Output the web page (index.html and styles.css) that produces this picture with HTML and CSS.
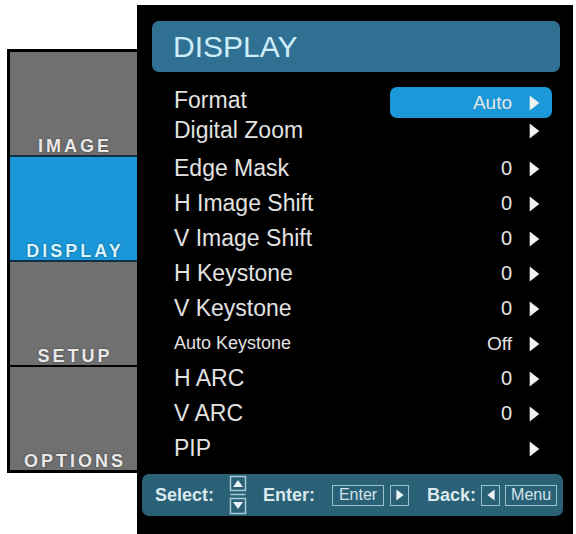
FILE: index.html
```html
<!DOCTYPE html>
<html lang="en">
<head>
  <meta charset="UTF-8" />
  <title>Projector OSD - Display</title>
  <link rel="stylesheet" href="styles.css">
</head>
<body>
  <svg class="defs" width="0" height="0">
    <symbol id="tri-right" viewBox="0 0 10 15"><path d="M0.5 0.5 L9.5 7.5 L0.5 14.5 Z" /></symbol>
    <symbol id="tri-left" viewBox="0 0 10 15"><path d="M9.5 0.5 L0.5 7.5 L9.5 14.5 Z" /></symbol>
  </svg>

  <div class="osd">
    <nav class="tabs">
      <div class="tab">IMAGE</div>
      <div class="tab active">DISPLAY</div>
      <div class="tab">SETUP</div>
      <div class="tab">OPTIONS</div>
    </nav>

    <section class="panel">
      <h1 class="panel-title">DISPLAY</h1>

      <ul class="items">
        <li class="item first">
          <span class="label">Format</span>
          <span class="val pill">Auto <svg class="arr"><use href="#tri-right"/></svg></span>
        </li>
        <li class="item second">
          <span class="label">Digital Zoom</span>
          <span class="val"><svg class="arr"><use href="#tri-right"/></svg></span>
        </li>
        <li class="item">
          <span class="label">Edge Mask</span>
          <span class="val">0 <svg class="arr"><use href="#tri-right"/></svg></span>
        </li>
        <li class="item">
          <span class="label">H Image Shift</span>
          <span class="val">0 <svg class="arr"><use href="#tri-right"/></svg></span>
        </li>
        <li class="item">
          <span class="label">V Image Shift</span>
          <span class="val">0 <svg class="arr"><use href="#tri-right"/></svg></span>
        </li>
        <li class="item">
          <span class="label">H Keystone</span>
          <span class="val">0 <svg class="arr"><use href="#tri-right"/></svg></span>
        </li>
        <li class="item">
          <span class="label">V Keystone</span>
          <span class="val">0 <svg class="arr"><use href="#tri-right"/></svg></span>
        </li>
        <li class="item small">
          <span class="label">Auto Keystone</span>
          <span class="val">Off <svg class="arr"><use href="#tri-right"/></svg></span>
        </li>
        <li class="item">
          <span class="label">H ARC</span>
          <span class="val">0 <svg class="arr"><use href="#tri-right"/></svg></span>
        </li>
        <li class="item">
          <span class="label">V ARC</span>
          <span class="val">0 <svg class="arr"><use href="#tri-right"/></svg></span>
        </li>
        <li class="item">
          <span class="label">PIP</span>
          <span class="val"><svg class="arr"><use href="#tri-right"/></svg></span>
        </li>
      </ul>

      <div class="hints">
        <span class="hint">Select:</span>
        <svg class="updown" width="18" height="40" viewBox="0 0 18 40">
          <rect x="1.5" y="1.5" width="15" height="14" />
          <path class="fill" d="M4 12 L9 5 L14 12 Z" />
          <line x1="1.5" y1="19.5" x2="16.5" y2="19.5" />
          <rect x="1.5" y="23.5" width="15" height="15" />
          <path class="fill" d="M4 27 L9 34 L14 27 Z" />
        </svg>
        <span class="hint enter">Enter:</span>
        <span class="key k-enter">Enter</span>
        <span class="key k-arrow"><svg class="karr"><use href="#tri-right"/></svg></span>
        <span class="hint back">Back:</span>
        <span class="key k-arrow k-left"><svg class="karr"><use href="#tri-left"/></svg></span>
        <span class="key k-menu">Menu</span>
      </div>
    </section>
  </div>
</body>
</html>
```

FILE: styles.css
```css
* {
  margin: 0; padding: 0; box-sizing: border-box;
}
html, body {
  height: 100%;
  overflow: hidden;
}
body {
  background-color: #fff;
  font-family: "Liberation Sans", Arial, sans-serif;
}
.defs {
  position: absolute;
}
.osd {
  display: flex;
  align-items: flex-start;
  padding: 5px 0 0 7px;
}

/* left tabs */
.tabs {
  width: 130px;
  margin-top: 44px;
  border: 3px solid #000;
  border-right: 0;
  display: flex;
  flex-direction: column;
  background-color: #000;
}
.tab {
  height: 103px;
  display: flex;
  align-items: flex-end;
  justify-content: center;
  padding-left: 3px;
  background-color: #707070;
  color: #e9e9e9;
  font-weight: bold;
  font-size: 18px;
  line-height: 18px;
  letter-spacing: 3px;
  text-shadow: 0 0 2px rgba(0,0,0,0.55);
}
.tab + .tab {
  margin-top: 2px;
}
.tab.active {
  background-color: #1a97d8;
  color: #d9f5ff;
  box-shadow: 0 -2px 0 #0f2f45, 0 2px 0 #0f2f45;
}

/* main panel */
.panel {
  width: 436px;
  height: 529px;
  background-color: #000;
}
.panel-title {
  margin: 16px 13px 0 15px;
  height: 51px;
  display: flex;
  align-items: center;
  padding-left: 21px;
  background-color: #2f7093;
  border-radius: 7px;
  color: #cdeef9;
  font-size: 30px;
  font-weight: normal;
}
.items {
  list-style-type: none;
  margin-top: 11px;
  padding: 0 21px 0 37px;
}
.item {
  display: flex;
  align-items: flex-start;
  height: 35px;
  line-height: 35px;
  font-size: 23px;
  color: #e2e2e2;
}
.item.first {
  height: 30px;
}
.item.second {
  height: 38px;
}
.item.small .label {
  font-size: 18px;
}
.val {
  margin-left: auto;
  display: flex;
  align-items: center;
  justify-content: flex-end;
  height: 35px;
  padding: 0 12px;
  font-size: 20px;
  color: #e4e4e4;
}
.item.small .val {
  font-size: 19px;
}
.val.pill {
  width: 162px;
  height: 31px;
  margin-top: 4px;
  background-color: #1a98d9;
  border-radius: 7px;
  font-size: 19px;
}
.arr {
  width: 11px;
  height: 16px;
  margin-left: 17px;
  fill: #f2f2f2;
}

/* footer hints */
.hints {
  margin: 8px 10px 0 5px;
  height: 42px;
  display: flex;
  align-items: center;
  padding-left: 13px;
  background-color: #2a6176;
  border-radius: 7px;
  color: #dbe9ee;
}
.hint {
  font-weight: bold;
  font-size: 18px;
}
.updown {
  margin-left: 15px;
  fill: none;
  stroke: #a9cbd8;
  stroke-width: 1.5;
}
.updown .fill {
  fill: #e8f1f4;
  stroke: none;
}
.hint.enter {
  margin-left: 16px;
}
.key {
  height: 21px;
  display: flex;
  align-items: center;
  justify-content: center;
  border: 1.5px solid #9dc0ce;
  padding: 0 4px;
  font-size: 16px;
  color: #d3e4ea;
}
.k-enter {
  margin-left: 17px;
  width: 52px;
}
.k-arrow {
  width: 19px;
  padding: 0;
  margin-left: 6px;
}
.karr {
  width: 8px;
  height: 12px;
  fill: #eef5f7;
}
.hint.back {
  margin-left: 18px;
}
.k-left {
  margin-left: 5px;
}
.k-menu {
  margin-left: 5px;
  width: 52px;
}
```
